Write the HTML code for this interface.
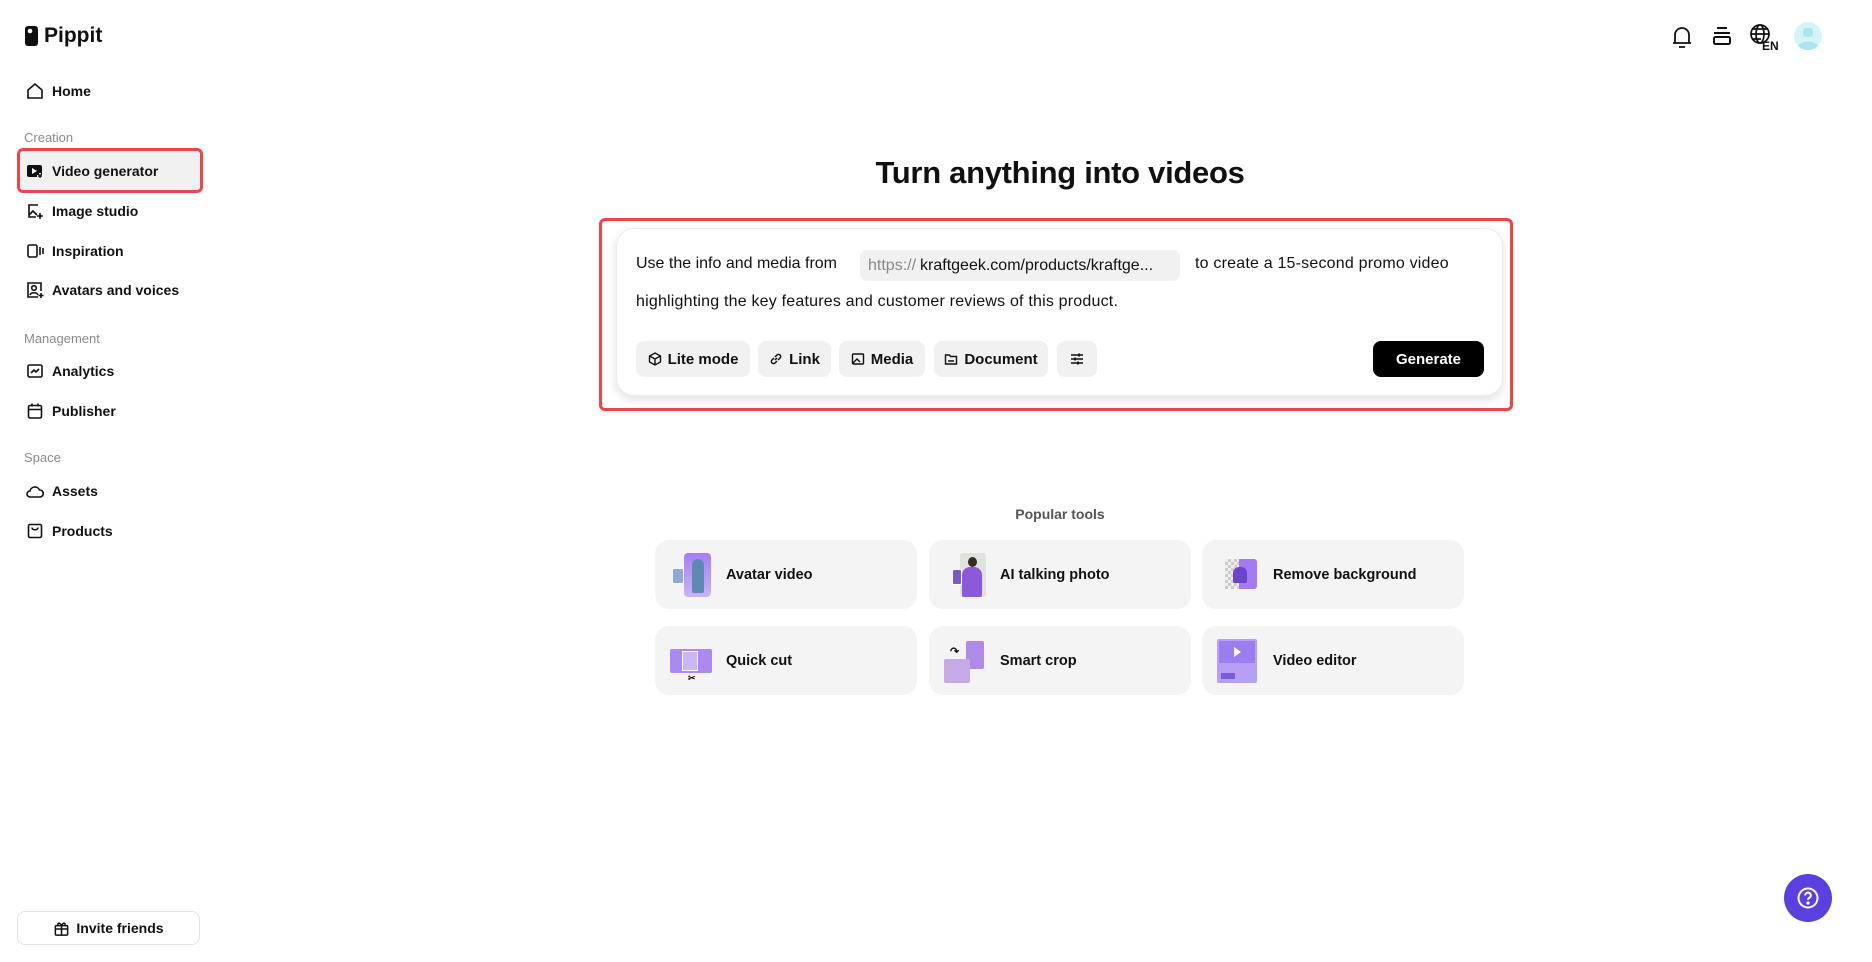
<!DOCTYPE html>
<html><head><meta charset="utf-8"><style>
*{box-sizing:border-box;margin:0;padding:0}
body{width:1872px;height:962px;background:#fff;font-family:"Liberation Sans",sans-serif;color:#111;position:relative;overflow:hidden}
.a{position:absolute}
.nav{position:absolute;left:26px;display:flex;align-items:center;font-size:14px;font-weight:bold;height:22px}
.nav svg{width:18px;height:18px;margin-right:8px}
.sec{position:absolute;left:24px;font-size:13px;color:#8a8a8a}
.btn{position:absolute;top:341px;height:36px;background:#f1f1f1;border-radius:8px;display:flex;align-items:center;justify-content:center;font-size:15px;font-weight:bold;gap:6px}
.card{position:absolute;width:262px;height:69px;background:#f4f4f4;border-radius:14px;display:flex;align-items:center;font-size:14.5px;font-weight:bold}
.th{width:42px;height:44px;margin-left:15px;margin-right:14px;border-radius:4px;position:relative}
</style></head><body>
<div class="a" style="left:24px;top:24px;display:flex;align-items:center;font-size:21px;font-weight:bold">
<svg width="16" height="22" viewBox="0 0 16 22"><rect x="1" y="1" width="13" height="20" rx="3" fill="#111"/><circle cx="6" cy="6" r="2.3" fill="#fff"/></svg><span style="margin-left:4px">Pippit</span></div>

<div class="nav" style="top:80px"><svg viewBox="0 0 18 18" fill="none" stroke="#111" stroke-width="1.6"><path d="M2 8L9 2l7 6v8H2z"/></svg>Home</div>
<div class="sec" style="top:130px">Creation</div>
<div class="a" style="left:17px;top:148px;width:186px;height:45px;border:3px solid #ef4444;border-radius:6px"></div>
<div class="a" style="left:20px;top:151px;width:180px;height:39px;background:#f1f1f1;border-radius:5px"></div>
<div class="nav" style="top:160px"><svg viewBox="0 0 18 18"><rect x="1" y="3" width="15" height="12" rx="2" fill="#111"/><path d="M6 6l5 3-5 3z" fill="#fff"/><path d="M14 11v6M11 14h6" stroke="#fff" stroke-width="2"/><path d="M14 12v4M12 14h4" stroke="#111" stroke-width="1.4"/></svg>Video generator</div>
<div class="nav" style="top:200px"><svg viewBox="0 0 18 18" fill="none" stroke="#111" stroke-width="1.6"><path d="M12 3H3v12h7"/><path d="M3 13l4-4 4 4"/><path d="M14 11v6M11 14h6"/></svg>Image studio</div>
<div class="nav" style="top:240px"><svg viewBox="0 0 18 18" fill="none" stroke="#111" stroke-width="1.6"><rect x="2" y="3" width="9" height="12" rx="1.5"/><path d="M14 5v8M17 6v6"/></svg>Inspiration</div>
<div class="nav" style="top:279px"><svg viewBox="0 0 18 18" fill="none" stroke="#111" stroke-width="1.6"><path d="M12 16H2V2h13v8"/><circle cx="8" cy="7" r="2.3"/><path d="M4 14c1-3 7-3 8 0"/><path d="M15 12v5M12.5 14.5h5"/></svg>Avatars and voices</div>
<div class="sec" style="top:331px">Management</div>
<div class="nav" style="top:360px"><svg viewBox="0 0 18 18" fill="none" stroke="#111" stroke-width="1.6"><rect x="2" y="3" width="14" height="12" rx="1.5"/><path d="M5 11l3-3 2 2 3-3"/></svg>Analytics</div>
<div class="nav" style="top:400px"><svg viewBox="0 0 18 18" fill="none" stroke="#111" stroke-width="1.6"><rect x="2.5" y="3.5" width="13" height="12.5" rx="1.5"/><path d="M2.5 7.5h13M6 1.5v3M12 1.5v3"/></svg>Publisher</div>
<div class="sec" style="top:450px">Space</div>
<div class="nav" style="top:480px"><svg viewBox="0 0 18 18" fill="none" stroke="#111" stroke-width="1.6"><path d="M4 15a3 3 0 010-6 5 5 0 019.5-1 3.5 3.5 0 01.5 7z"/></svg>Assets</div>
<div class="nav" style="top:520px"><svg viewBox="0 0 18 18" fill="none" stroke="#111" stroke-width="1.6"><rect x="2.5" y="2.5" width="13" height="13" rx="1.5"/><path d="M6 5.5c0 3 6 3 6 0"/></svg>Products</div>

<div class="a" style="left:17px;top:911px;width:183px;height:34px;border:1px solid #e2e2e2;border-radius:8px;display:flex;align-items:center;justify-content:center;font-size:14px;font-weight:bold;gap:6px">
<svg width="17" height="17" viewBox="0 0 18 18" fill="none" stroke="#111" stroke-width="1.6"><rect x="2.5" y="6" width="13" height="10" rx="1"/><path d="M2.5 9.5h13M9 6v10M9 6C7 2 4 3 5.5 6M9 6c2-4 5-3 3.5 0"/></svg>Invite friends</div>

<svg class="a" style="left:1671px;top:25px" width="22" height="24" viewBox="0 0 22 24" fill="none" stroke="#111" stroke-width="1.8"><path d="M4 18V10a7 7 0 0114 0v8M2 18h18M8 22h6"/></svg>
<svg class="a" style="left:1711px;top:25px" width="22" height="22" viewBox="0 0 22 22" fill="none" stroke="#111" stroke-width="2"><path d="M6 3h10M3 8h16"/><rect x="3" y="12" width="16" height="7" rx="1.5"/></svg>
<svg class="a" style="left:1749px;top:23px" width="30" height="28" viewBox="0 0 30 28"><g fill="none" stroke="#111" stroke-width="1.7"><circle cx="11" cy="11" r="9"/><ellipse cx="11" cy="11" rx="4" ry="9"/><path d="M2 11h18M4 6h14M4 16h8"/></g><text x="13" y="27" font-family="Liberation Sans" font-weight="bold" font-size="12" fill="#111">EN</text></svg>
<svg class="a" style="left:1794px;top:22px" width="28" height="28" viewBox="0 0 28 28"><circle cx="14" cy="14" r="14" fill="#d6f3f7"/><rect x="9" y="6" width="10" height="9" rx="3" fill="#a8e6f0"/><path d="M4 24c3-6 17-6 20 0a14 14 0 01-20 0z" fill="#a8e6f0"/></svg>

<div class="a" style="left:0;width:2120px;top:155px;text-align:center;font-size:31px;font-weight:bold;letter-spacing:-0.3px">Turn anything into videos</div>

<div class="a" style="left:599px;top:218px;width:914px;height:193px;border:3px solid #ef4444;border-radius:6px"></div>
<div class="a" style="left:616px;top:228px;width:887px;height:168px;background:#fff;border:1px solid #ececec;border-radius:18px;box-shadow:0 4px 10px rgba(0,0,0,0.12)"></div>
<div class="a" style="left:636px;top:255px;font-size:16px">Use the info and media from</div>
<div class="a" style="left:860px;top:250px;width:320px;height:31px;background:#f1f1f1;border-radius:7px;font-size:16px;display:flex;align-items:center;padding-left:8px"><span style="color:#888;margin-right:4px">https://</span>kraftgeek.com/products/kraftge...</div>
<div class="a" style="left:1195px;top:255px;font-size:16px;letter-spacing:0.2px">to create a 15-second promo video</div>
<div class="a" style="left:636px;top:293px;font-size:16px;letter-spacing:0.2px">highlighting the key features and customer reviews of this product.</div>

<div class="btn" style="left:636px;width:114px"><svg width="14" height="14" viewBox="0 0 14 14" fill="none" stroke="#111" stroke-width="1.4"><path d="M7 1l5.5 3v6L7 13 1.5 10V4zM1.5 4L7 7l5.5-3M7 7v6"/></svg>Lite mode</div>
<div class="btn" style="left:758px;width:73px"><svg width="14" height="14" viewBox="0 0 14 14" fill="none" stroke="#111" stroke-width="1.5"><path d="M6 8l2-2M5 6L3 8a2.1 2.1 0 003 3l2-2M9 8l2-2a2.1 2.1 0 00-3-3L6 5"/></svg>Link</div>
<div class="btn" style="left:839px;width:86px"><svg width="14" height="14" viewBox="0 0 14 14" fill="none" stroke="#111" stroke-width="1.4"><rect x="1.5" y="2" width="11" height="10" rx="1"/><path d="M2 11l4-4 3 3"/></svg>Media</div>
<div class="btn" style="left:934px;width:114px"><svg width="14" height="14" viewBox="0 0 14 14" fill="none" stroke="#111" stroke-width="1.4"><path d="M1.5 3h4l1 1.5h6V12h-11zM4 9h6"/></svg>Document</div>
<div class="btn" style="left:1057px;width:40px"><svg width="14" height="14" viewBox="0 0 14 14" fill="none" stroke="#111" stroke-width="1.4"><path d="M1 3h12M1 7h12M1 11h12"/><path d="M9 1.5v3M5 5.5v3M8 9.5v3" stroke-width="1.8"/></svg></div>
<div class="a" style="left:1373px;top:341px;width:111px;height:36px;background:#000;color:#fff;border-radius:8px;display:flex;align-items:center;justify-content:center;font-size:15px;font-weight:bold">Generate</div>

<div class="a" style="left:0;width:2120px;top:506px;text-align:center;font-size:14px;color:#555;font-weight:bold">Popular tools</div>

<div class="card" style="left:655px;top:540px"><div class="th"><div class="a" style="left:14px;top:0;width:27px;height:44px;background:linear-gradient(#a77cf4,#c8b3f7);border-radius:4px"></div><div class="a" style="left:22px;top:6px;width:12px;height:34px;background:#5c8ab0;border-radius:6px 6px 2px 2px"></div><div class="a" style="left:2px;top:15px;width:12px;height:16px;background:#8fa8d8;border:1px solid #fff;border-radius:2px"></div></div>Avatar video</div>
<div class="card" style="left:929px;top:540px"><div class="th"><div class="a" style="left:16px;top:0;width:26px;height:44px;background:#dfe3e0;border-radius:3px"></div><div class="a" style="left:18px;top:14px;width:20px;height:30px;background:#8a5ad8;border-radius:8px 8px 2px 2px"></div><div class="a" style="left:24px;top:4px;width:9px;height:10px;background:#3b2a22;border-radius:50%"></div><div class="a" style="left:8px;top:16px;width:10px;height:16px;background:#7a5ac8;border:1px solid #fff;border-radius:2px"></div></div>AI talking photo</div>
<div class="card" style="left:1202px;top:540px"><div class="th"><div class="a" style="left:8px;top:6px;width:14px;height:30px;background:repeating-conic-gradient(#ccc 0 25%,#eee 0 50%) 0 0/6px 6px"></div><div class="a" style="left:22px;top:6px;width:18px;height:30px;background:#a47bf2;border-radius:0 3px 3px 0"></div><div class="a" style="left:16px;top:14px;width:14px;height:16px;background:#6a45c8;border-radius:6px 6px 2px 2px"></div></div>Remove background</div>
<div class="card" style="left:655px;top:626px"><div class="th"><div class="a" style="left:0;top:10px;width:42px;height:24px;background:#a88af0;border-radius:2px"></div><div class="a" style="left:12px;top:12px;width:16px;height:20px;background:#c9b6f8;border:1px solid #fff"></div><div class="a" style="left:18px;top:34px;font-size:9px">✂</div></div>Quick cut</div>
<div class="card" style="left:929px;top:626px"><div class="th"><div class="a" style="left:22px;top:2px;width:18px;height:28px;background:#b08ae8;border-radius:2px"></div><div class="a" style="left:0;top:20px;width:26px;height:24px;background:#c7a9e8;border-radius:2px"></div><div class="a" style="left:6px;top:6px;font-size:11px;font-weight:bold">↷</div></div>Smart crop</div>
<div class="card" style="left:1202px;top:626px"><div class="th"><div class="a" style="left:0;top:0;width:40px;height:44px;background:#b69ff6;border-radius:2px"></div><div class="a" style="left:2px;top:2px;width:36px;height:22px;background:#9a7ef0"></div><div class="a" style="left:17px;top:8px;width:0;height:0;border-left:7px solid #fff;border-top:5px solid transparent;border-bottom:5px solid transparent"></div><div class="a" style="left:4px;top:34px;width:14px;height:6px;background:#7a58e0"></div></div>Video editor</div>

<div class="a" style="left:1784px;top:874px;width:48px;height:48px;border-radius:50%;background:#5b3fe0;display:flex;align-items:center;justify-content:center">
<svg width="24" height="24" viewBox="0 0 24 24" fill="none" stroke="#fff" stroke-width="2"><circle cx="12" cy="12" r="9.5"/><path d="M9.2 9.5a2.8 2.8 0 115 1.6c-1 .8-2.2 1.3-2.2 2.7"/><circle cx="12" cy="17" r=".6" fill="#fff"/></svg></div>
</body></html>
